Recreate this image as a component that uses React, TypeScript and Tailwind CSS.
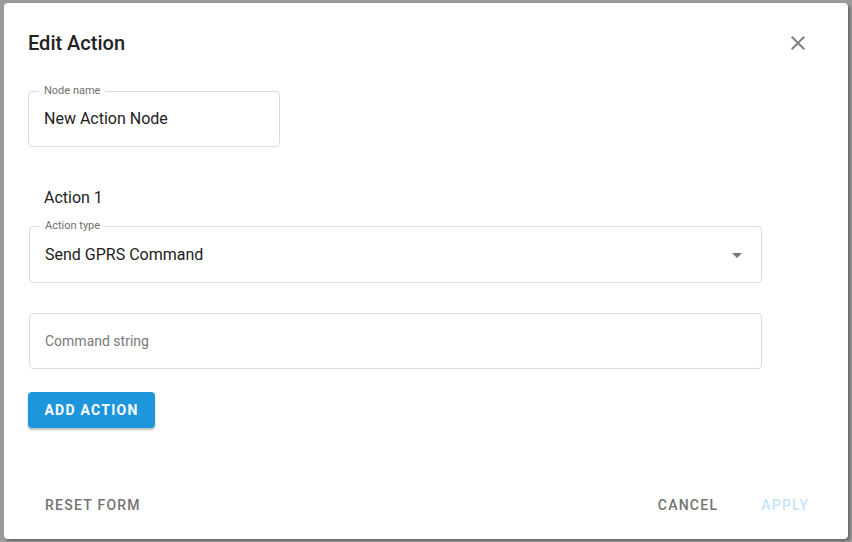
import { useState } from 'react';

function OutlinedField({
  label,
  value,
  className,
  select,
}: {
  label?: string;
  value: string;
  className?: string;
  select?: boolean;
}) {
  return (
    <div
      className={`relative rounded-[4px] border border-[#dcdcdc] flex items-center pl-[15px] ${select ? 'pr-[12px]' : 'pr-[14px]'} ${className ?? ''}`}
    >
      {label && (
        <span className="absolute -top-[8px] left-[10px] bg-white px-[5px] text-[11px] leading-[14px] text-[#707070]">
          {label}
        </span>
      )}
      <span className="flex-1 text-[16px] leading-[20px] text-[#222]">{value}</span>
      {select && (
        <svg viewBox="0 0 24 24" className="w-6 h-6 fill-[#777]">
          <path d="M7 10l5 5 5-5z" />
        </svg>
      )}
    </div>
  );
}

export default function App() {
  const [name] = useState('New Action Node');

  return (
    <div
      className="w-full h-[542px] bg-[#9b9b9b] pt-[3px] pb-[3px] pl-[4px] pr-[4px]"
      style={{ fontFamily: 'Roboto, "Liberation Sans", sans-serif' }}
    >
      <div className="h-full w-full bg-white rounded-[4px] shadow-[2px_2px_3px_rgba(0,0,0,0.35)] flex flex-col px-6">
        <div className="flex items-center pt-[28px]">
          <h2 className="flex-1 text-[20px] leading-[24px] font-medium text-[#222]">Edit Action</h2>
          <button className="w-6 h-6 mr-[14px] flex items-center justify-center">
            <svg viewBox="0 0 24 24" className="w-6 h-6 fill-[#808080]">
              <path d="M19 6.41L17.59 5 12 10.59 6.41 5 5 6.41 10.59 12 5 17.59 6.41 19 12 13.41 17.59 19 19 17.59 13.41 12z" />
            </svg>
          </button>
        </div>

        <OutlinedField label="Node name" value={name} className="mt-[36px] w-[252px] h-[56px]" />

        <div className="mt-[39px] pl-[16px] text-[16px] leading-[24px] text-[#222]">Action 1</div>

        <OutlinedField
          label="Action type"
          value="Send GPRS Command"
          select
          className="mt-[16px] ml-[1px] w-[733px] h-[57px]"
        />

        <div className="mt-[30px] ml-[1px] w-[733px] h-[56px] rounded-[4px] border border-[#dcdcdc] flex items-center pl-[15px]">
          <span className="text-[14px] text-[#7a7a7a]">Command string</span>
        </div>

        <button className="mt-[23px] w-[127px] h-[36px] rounded-[4px] bg-[#1e96dd] text-white text-[14px] font-bold tracking-[1.25px] shadow-[0_2px_2px_rgba(0,0,0,0.25)]">
          ADD ACTION
        </button>

        <div className="mt-auto mb-[24px] flex items-center text-[14px] font-medium tracking-[1.25px] leading-[20px]">
          <button className="ml-[17px] text-[#737373]">RESET FORM</button>
          <div className="flex-1" />
          <button className="text-[#737373]">CANCEL</button>
          <button className="ml-[43px] mr-[15px] text-[#c6e3f6]">APPLY</button>
        </div>
      </div>
    </div>
  );
}
